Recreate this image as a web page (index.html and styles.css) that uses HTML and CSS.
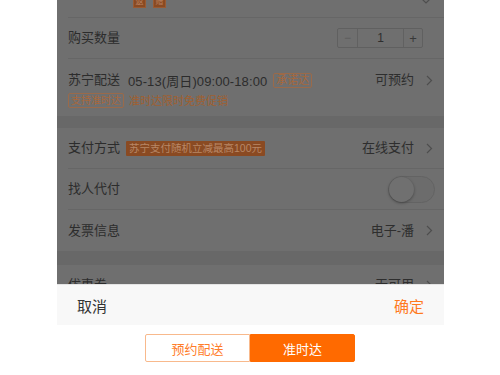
FILE: index.html
```html
<!DOCTYPE html>
<html lang="zh">
<head>
<meta charset="utf-8">
<title>订单确认</title>
<link rel="stylesheet" href="styles.css">
</head>
<body>
<div class="phone">
  <div class="row top-row">
    <div class="mini-tags">
      <span class="mini-tag">返</span>
      <span class="mini-tag">赠</span>
    </div>
    <svg class="chev-down" width="12" height="6" viewBox="0 0 12 6"><path d="M1 -1 L6 4 L11 -1" fill="none" stroke="#4e4e4e" stroke-width="1.2"/></svg>
  </div>

  <div class="row line">
    <span class="label">购买数量</span>
    <div class="stepper">
      <span class="step minus">−</span>
      <span class="step count">1</span>
      <span class="step plus">+</span>
    </div>
  </div>

  <div class="row delivery">
    <div class="delivery-main">
      <span class="label">苏宁配送</span>
      <span class="date">05-13(周日)09:00-18:00</span>
      <span class="tag-outline big">承诺达</span>
      <span class="value push">可预约</span>
      <svg class="chev" width="7" height="11" viewBox="0 0 7 11"><path d="M1 1 L5.5 5.5 L1 10" fill="none" stroke="#4e4e4e" stroke-width="1.2"/></svg>
    </div>
    <div class="delivery-sub">
      <span class="tag-outline">支持准时达</span>
      <span class="promo">准时达限时免费促销</span>
    </div>
  </div>

  <div class="gap first-gap"></div>

  <div class="row line">
    <span class="label">支付方式</span>
    <span class="tag-fill">苏宁支付随机立减最高100元</span>
    <span class="value push">在线支付</span>
    <svg class="chev" width="7" height="11" viewBox="0 0 7 11"><path d="M1 1 L5.5 5.5 L1 10" fill="none" stroke="#4e4e4e" stroke-width="1.2"/></svg>
  </div>

  <div class="row line">
    <span class="label">找人代付</span>
    <span class="toggle push"><span class="knob"></span></span>
  </div>

  <div class="row line last">
    <span class="label">发票信息</span>
    <span class="value push">电子-潘</span>
    <svg class="chev" width="7" height="11" viewBox="0 0 7 11"><path d="M1 1 L5.5 5.5 L1 10" fill="none" stroke="#4e4e4e" stroke-width="1.2"/></svg>
  </div>

  <div class="gap"></div>

  <div class="row line">
    <span class="label">优惠券</span>
    <span class="value push">无可用</span>
    <svg class="chev" width="7" height="11" viewBox="0 0 7 11"><path d="M1 1 L5.5 5.5 L1 10" fill="none" stroke="#4e4e4e" stroke-width="1.2"/></svg>
  </div>
</div>

<div class="sheet-head">
  <span class="cancel">取消</span>
  <span class="confirm">确定</span>
</div>

<div class="sheet-body">
  <div class="switch">
    <span class="opt">预约配送</span>
    <span class="opt active">准时达</span>
  </div>
</div>
</body>
</html>
```

FILE: styles.css
```css
* { box-sizing: border-box; }
html, body { margin: 0; padding: 0; background: #fff; }
body {
  width: 500px;
  height: 375px;
  overflow: hidden;
  font-family: "Liberation Sans", "Noto Sans CJK SC", sans-serif;
  color: #2c2c2c;
}

.phone {
  width: 387px;
  margin-left: 57px;
  height: 284px;
  overflow: hidden;
  background: #6f6f6f;
}

.row {
  display: flex;
  align-items: center;
  margin-left: 11px;
  padding-right: 10px;
  border-bottom: 1px solid #666;
}

.top-row {
  height: 18px;
  align-items: flex-start;
  justify-content: space-between;
}
.mini-tags { display: flex; gap: 7px; padding-left: 65px; margin-top: -5px; }
.mini-tag {
  width: 13px; height: 13px;
  background: #8a4a22;
  border: 1px solid #9a5a32;
  color: #b88060;
  font-size: 8px;
  line-height: 11px;
  text-align: center;
}
.chev-down { margin-right: 2px; margin-top: -1px; }

.line { height: 41px; }
.last { border-bottom: none; }

.label { font-size: 13px; line-height: 16px; }
.value { font-size: 13px; line-height: 16px; color: #2e2e2e; }
.push { margin-left: auto; }
.chev { margin-left: 12px; margin-right: 1px; }

.stepper {
  margin-left: auto;
  margin-right: 11px;
  display: flex;
  height: 20px;
  border: 1px solid #606060;
  border-radius: 2px;
}
.step {
  display: flex; align-items: center; justify-content: center;
  font-size: 12px;
}
.minus { width: 20px; color: #5c5c5c; border-right: 1px solid #616161; }
.count { width: 46px; color: #2e2e2e; border-right: 1px solid #616161; }
.plus { width: 18px; color: #383838; font-size: 13px; }

.delivery {
  flex-direction: column;
  align-items: stretch;
  height: 57px;
  padding-top: 13px;
  border-bottom: none;
}
.delivery-main { display: flex; align-items: center; height: 16px; }
.date { font-size: 13px; margin-left: 8px; letter-spacing: 0.1px; }
.tag-outline {
  font-size: 10px;
  line-height: 13px;
  padding: 0 2px;
  border: 1px solid #9a6a4a;
  border-radius: 2px;
  color: #a8683c;
}
.tag-outline.big { font-size: 11px; line-height: 13px; margin-left: 6px; }
.delivery-sub { display: flex; align-items: center; margin-top: 4px; }
.promo { font-size: 11px; color: #a0602f; margin-left: 5px; }

.gap { height: 14px; background: #686868; }
.first-gap { height: 12px; }

.tag-fill {
  margin-left: 6px;
  font-size: 10.5px;
  line-height: 15px;
  padding: 0 3px;
  background: #8a4a22;
  color: #b88766;
  border-radius: 1px;
}

.toggle {
  width: 47px; height: 27px;
  border-radius: 14px;
  border: 1px solid #636363;
  background: #6c6c6c;
  position: relative;
  margin-right: -1px;
}
.knob {
  position: absolute;
  left: 0; top: 0;
  width: 25px; height: 25px;
  border-radius: 50%;
  background: #707070;
  box-shadow: 0 1px 3px rgba(0,0,0,0.35);
}

.sheet-head {
  width: 387px;
  margin-left: 57px;
  height: 41px;
  background: #f8f8f8;
  border-top: 1px solid #e4e4e4;
  display: flex;
  align-items: center;
  justify-content: space-between;
  padding: 0 20px;
  font-size: 15px;
}
.cancel { color: #333; }
.confirm { color: #ff7a1e; }

.sheet-body {
  display: flex;
  justify-content: center;
  padding-top: 9px;
}
.switch { display: flex; }
.opt {
  width: 105px; height: 28px;
  display: flex; align-items: center; justify-content: center;
  font-size: 13px;
  color: #ff7d2a;
  border: 1px solid #f8b98c;
  border-radius: 2px 0 0 2px;
}
.opt.active {
  background: #ff6a00;
  border-color: #ff6a00;
  color: #fff;
  border-radius: 0 2px 2px 0;
}
```
